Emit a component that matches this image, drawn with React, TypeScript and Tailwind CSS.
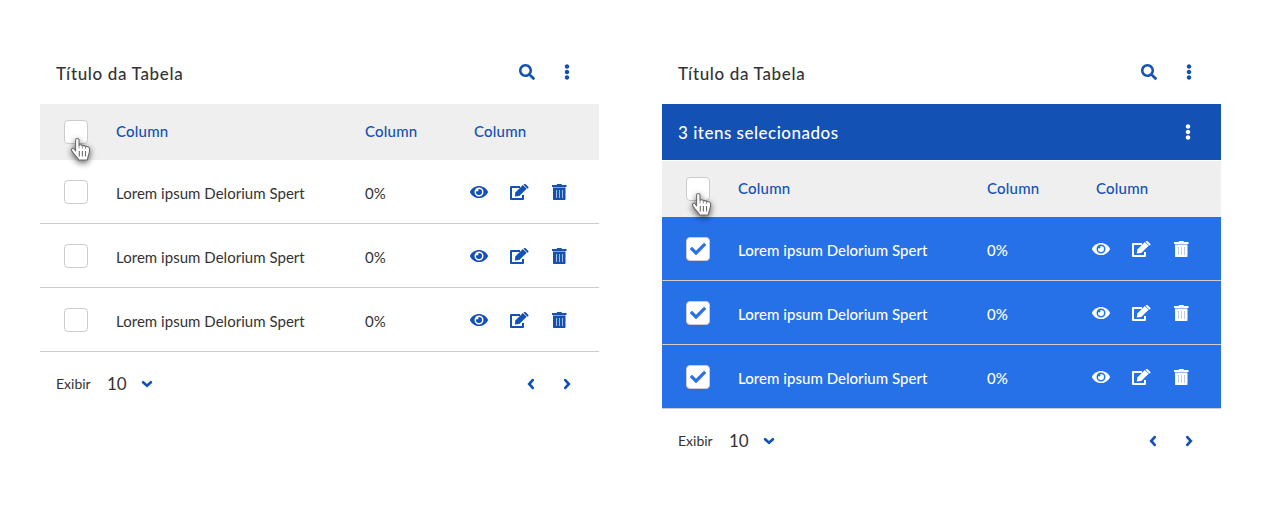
import React from "react";
import { FaSearch, FaEllipsisV, FaEye, FaCheck } from "react-icons/fa";

function EditIcon({ className }: { className: string }) {
  return (
    <svg className={className} viewBox="0 0 19 16" fill="none">
      <path d="M10 3H1v12h12v-4" stroke="currentColor" strokeWidth="2" strokeLinejoin="round" />
      <path d="M4.800 12.600l.5-4.200 7.500-7.300 3.900 3.700-7.500 7.300z" fill="currentColor" />
      <path d="M13.500.7l.7-.5c.5-.4 1-.3 1.500.1l2.500 2.400c.4.500.4 1 0 1.500l-.7.600z" fill="currentColor" />
    </svg>
  );
}

function TrashIcon({ className }: { className: string }) {
  return (
    <svg className={className} viewBox="0 0 15 16" fill="none">
      <path d="M0 1h4.500l.8-1h4l.8 1h4.400v2H0z" fill="currentColor" />
      <path d="M1 3.500h12.500v11.700c0 .5-.3.800-.8.800H1.800c-.5 0-.8-.3-.8-.8z" fill="currentColor" />
      <path d="M4.500 6v8M7.500 6v8M10.500 6v8" stroke="#b5c7ea" strokeWidth=".9" />
    </svg>
  );
}

function Chevron({ className }: { className: string }) {
  return (
    <svg className={className} viewBox="0 0 12 12" fill="none">
      <path d="M2.100 4.300l3.900 3.500 3.900-3.500" stroke="currentColor" strokeWidth="2.700" strokeLinecap="round" strokeLinejoin="miter" />
    </svg>
  );
}

function HandCursor({ className }: { className: string }) {
  return (
    <svg className={className} viewBox="0 0 22 26" fill="none">
      <path
        d="M5.6 13.8V3.3C5.6 .9 9 .9 9 3.3v5.2c.6-1.1 3-.9 3.3.6.8-.9 2.9-.6 3.2.8 1-.7 3.8-.5 4.1 1.8.3 3-.6 5.200-1.400 7.400l-.9 3.900H8.700C7.700 20.800 5.500 19 4.200 17.200L1.800 13.900C.6 12 2.800 10.400 4.200 12z"
        fill="#fff"
        stroke="#6b6b6b"
        strokeWidth="1.100"
        strokeLinejoin="round"
      />
      <path d="M9.300 14v5.500M12.400 14v5.500M15.500 14v5.500" stroke="#6b6b6b" strokeWidth="1.100" />
      <path d="M9 9v2.500M12.300 9.500v2M15.600 10v2" stroke="#8a8a8a" strokeWidth=".9" />
    </svg>
  );
}

function Checkbox({ checked = false, children }: { checked?: boolean; children?: React.ReactNode }) {
  return (
    <span className="relative flex size-6 shrink-0 items-center justify-center rounded-[4px] border border-[#ccc] bg-white text-[#2670e8]">
      {checked && <FaCheck className="size-4" />}
      {children}
    </span>
  );
}

function HeaderRow({ selected }: { selected: boolean }) {
  return (
    <div className="flex h-14 items-center bg-[#efefef] pl-6 text-[15px] font-medium tracking-[0.2px] text-[#1351b4]">
      <Checkbox>
        <HandCursor
          className={
            selected
              ? "absolute left-[4px] top-[14px] h-[26px] w-[22px] overflow-visible drop-shadow-[0_2px_3px_rgba(0,0,0,0.65)]"
              : "absolute left-[5px] top-[16px] h-[26px] w-[22px] overflow-visible drop-shadow-[0_2px_3px_rgba(0,0,0,0.65)]"
          }
        />
      </Checkbox>
      <span className="ml-7 w-[249px] pb-0.5">Column</span>
      <span className="w-[109px] pb-0.5">Column</span>
      <span className="pb-0.5">Column</span>
    </div>
  );
}

function Row({ selected }: { selected: boolean }) {
  return (
    <div
      className={
        selected
          ? "flex h-16 items-center border-b border-[#ccc] bg-[#2670e8] pl-6 font-medium text-white"
          : "flex h-16 items-center border-b border-[#ccc] bg-white pl-6 text-[#333]"
      }
    >
      <Checkbox checked={selected} />
      <span className="ml-7 w-[249px] pt-[3px] text-[15px] tracking-[0.03px]">Lorem ipsum Delorium Spert</span>
      <span className="w-[105px] pt-[3px] text-[15px]">0%</span>
      <span className={selected ? "flex items-center text-white" : "flex items-center text-[#1351b4]"}>
        <FaEye className="h-4 w-[18px]" />
        <EditIcon className="ml-[22px] h-4 w-[19px]" />
        <TrashIcon className="ml-[23px] h-4 w-[15px]" />
      </span>
    </div>
  );
}

function DataTable({ selected = false }: { selected?: boolean }) {
  return (
    <section className="w-[559px]">
      <header className="flex h-16 items-center justify-between pl-4 pr-6">
        <h2 className="pt-1 text-[17px] font-medium tracking-[0.65px] text-[#333]">Título da Tabela</h2>
        <div className="flex items-center text-[#1351b4]">
          <FaSearch className="size-4" />
          <FaEllipsisV className="ml-6 size-4" />
        </div>
      </header>
      {selected && (
        <div className="mb-px flex h-14 items-center justify-between bg-[#1351b4] pl-4 pr-[25px] text-white">
          <span className="pt-0.5 text-[17px] font-medium tracking-[0.5px]">3 itens selecionados</span>
          <FaEllipsisV className="size-4" />
        </div>
      )}
      <HeaderRow selected={selected} />
      <Row selected={selected} />
      <Row selected={selected} />
      <Row selected={selected} />
      <footer className="flex h-16 items-center pl-4 pr-[26px] text-[#333]">
        <span className="w-[51px] pb-px text-[14px]">Exibir</span>
        <span className="w-[34px] text-[17px]">10</span>
        <Chevron className="size-3 text-[#1351b4]" />
        <div className="ml-auto flex gap-6 text-[#1351b4]">
          <Chevron className="size-3 rotate-90" />
          <Chevron className="size-3 -rotate-90" />
        </div>
      </footer>
    </section>
  );
}

export default function App() {
  return (
    <main className="flex h-[513px] w-[1261px] items-start gap-[63px] bg-white pl-10 pt-10 font-['Lato',sans-serif]">
      <DataTable />
      <DataTable selected />
    </main>
  );
}
